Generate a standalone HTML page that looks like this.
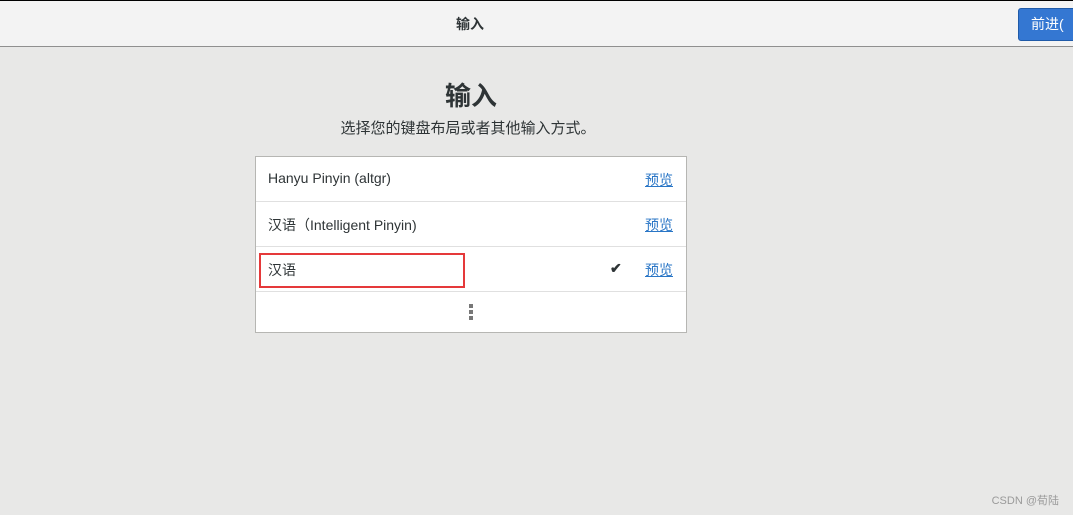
<!DOCTYPE html>
<html><head><meta charset="utf-8"><style>
body{margin:0;width:1073px;height:515px;background:#e8e8e7;font-family:"Liberation Sans","Noto Sans CJK SC",sans-serif;position:relative;overflow:hidden;color:#2e3436}
.top{position:absolute;left:0;top:0;width:1073px;height:47px;background:#f3f3f3;border-top:1px solid #000;border-bottom:1px solid #8f8f8f;box-sizing:border-box}
.top .t{position:absolute;left:0;width:940px;text-align:center;top:13px;font-size:14px;font-weight:bold;color:#2e3436}
.btn{position:absolute;left:1018px;top:7px;width:70px;height:33px;background:#3477d2;border:1px solid #1f5aa8;border-radius:3px;color:#fff;font-size:14px;line-height:31px;padding-left:12px;box-sizing:border-box}
h1{position:absolute;left:0;width:942px;text-align:center;top:76px;margin:0;font-size:26px;font-weight:bold;color:#2e3436}
.sub{position:absolute;left:0;width:936px;text-align:center;top:117px;font-size:15px}
.list{position:absolute;left:255px;top:156px;width:432px;height:177px;background:#fff;border:1px solid #b6b6b3;box-sizing:border-box}
.row{position:absolute;left:0;width:430px;height:44px;border-bottom:1px solid #e0e0e0}
.row span{position:absolute;left:12px;top:13px;font-size:14px}
.row a{position:absolute;right:13px;top:13px;font-size:14px;color:#2a76c6;text-decoration:underline}
.red{position:absolute;left:259px;top:253px;width:206px;height:35px;border:2px solid #e5393a;box-sizing:border-box}
.dots{position:absolute;left:469px;top:304px;width:4px}
.dots i{display:block;width:4px;height:4px;background:#777;margin-bottom:2px}
.wm{position:absolute;right:14px;top:492px;font-size:11px;color:#9a9a9a}
</style></head><body>
<div class="top"><div class="t">输入</div><div class="btn">前进(</div></div>
<h1>输入</h1>
<div class="sub">选择您的键盘布局或者其他输入方式。</div>
<div class="list">
<div class="row" style="top:0"><span>Hanyu Pinyin (altgr)</span><a>预览</a></div>
<div class="row" style="top:45px"><span>汉语（Intelligent Pinyin)</span><a>预览</a></div>
<div class="row" style="top:90px"><span>汉语</span><b style="position:absolute;left:354px;top:13px;font-size:14px">✔</b><a>预览</a></div>
</div>
<div class="red"></div>
<div class="dots"><i></i><i></i><i></i></div>
<div class="wm">CSDN @荀陆</div>
</body></html>
